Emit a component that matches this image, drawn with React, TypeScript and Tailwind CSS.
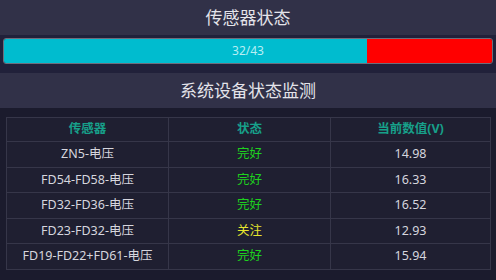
import React from 'react';

const rows = [
  { name: "ZN5-电压", status: "完好", value: "14.98" },
  { name: "FD54-FD58-电压", status: "完好", value: "16.33" },
  { name: "FD32-FD36-电压", status: "完好", value: "16.52" },
  { name: "FD23-FD32-电压", status: "关注", value: "12.93" },
  { name: "FD19-FD22+FD61-电压", status: "完好", value: "15.94" },
];

const App = () => {
  const done = 32;
  const total = 43;

  return (
    <div
      className="w-[496px] h-[280px] bg-[#1b1b2d] overflow-hidden text-[#d6d6de]"
      style={{ fontFamily: '"Noto Sans", "Noto Sans CJK SC", sans-serif' }}
    >
      {/* Sensor status */}
      <div className="h-[35px] bg-[#313148] flex items-center justify-center text-[17px] text-[#e4e4ea]">
        传感器状态
      </div>
      <div className="h-[38px] bg-[#21213a] px-[3px] pt-[3px]">
        <div className="relative h-[26px] flex rounded-[3px] border border-[#6e6e7c] overflow-hidden">
          <div className="bg-[#00bccf]" style={{ width: `${(done / total) * 100}%` }} />
          <div className="flex-1 bg-[#ff0000]" />
          <div className="absolute inset-0 flex items-center justify-center text-[12px] text-[#b8eef4]">
            {done}/{total}
          </div>
        </div>
      </div>

      {/* Device monitoring */}
      <div className="h-[35px] bg-[#313148] flex items-center justify-center text-[17px] text-[#e4e4ea]">
        系统设备状态监测
      </div>
      <div className="px-[6px] pt-[9px]">
        <table className="w-[485px] table-fixed border-collapse bg-[#1f1f31] text-[12.5px]">
          <thead>
            <tr className="h-[24px]">
              <th className="w-[162px] border border-[#363649] text-[#17a08a] font-bold">传感器</th>
              <th className="w-[162px] border border-[#363649] text-[#17a08a] font-bold">状态</th>
              <th className="border border-[#363649] text-[#17a08a] font-bold">当前数值(V)</th>
            </tr>
          </thead>
          <tbody>
            {rows.map((r) => (
              <tr key={r.name} className="h-[25.6px]">
                <td className="border border-[#363649] text-center">{r.name}</td>
                <td
                  className={`border border-[#363649] text-center ${
                    r.status === "关注" ? "text-[#e6e62e]" : "text-[#1ed21e]"
                  }`}
                >
                  {r.status}
                </td>
                <td className="border border-[#363649] text-center">{r.value}</td>
              </tr>
            ))}
          </tbody>
        </table>
      </div>
    </div>
  );
};

export default App;
